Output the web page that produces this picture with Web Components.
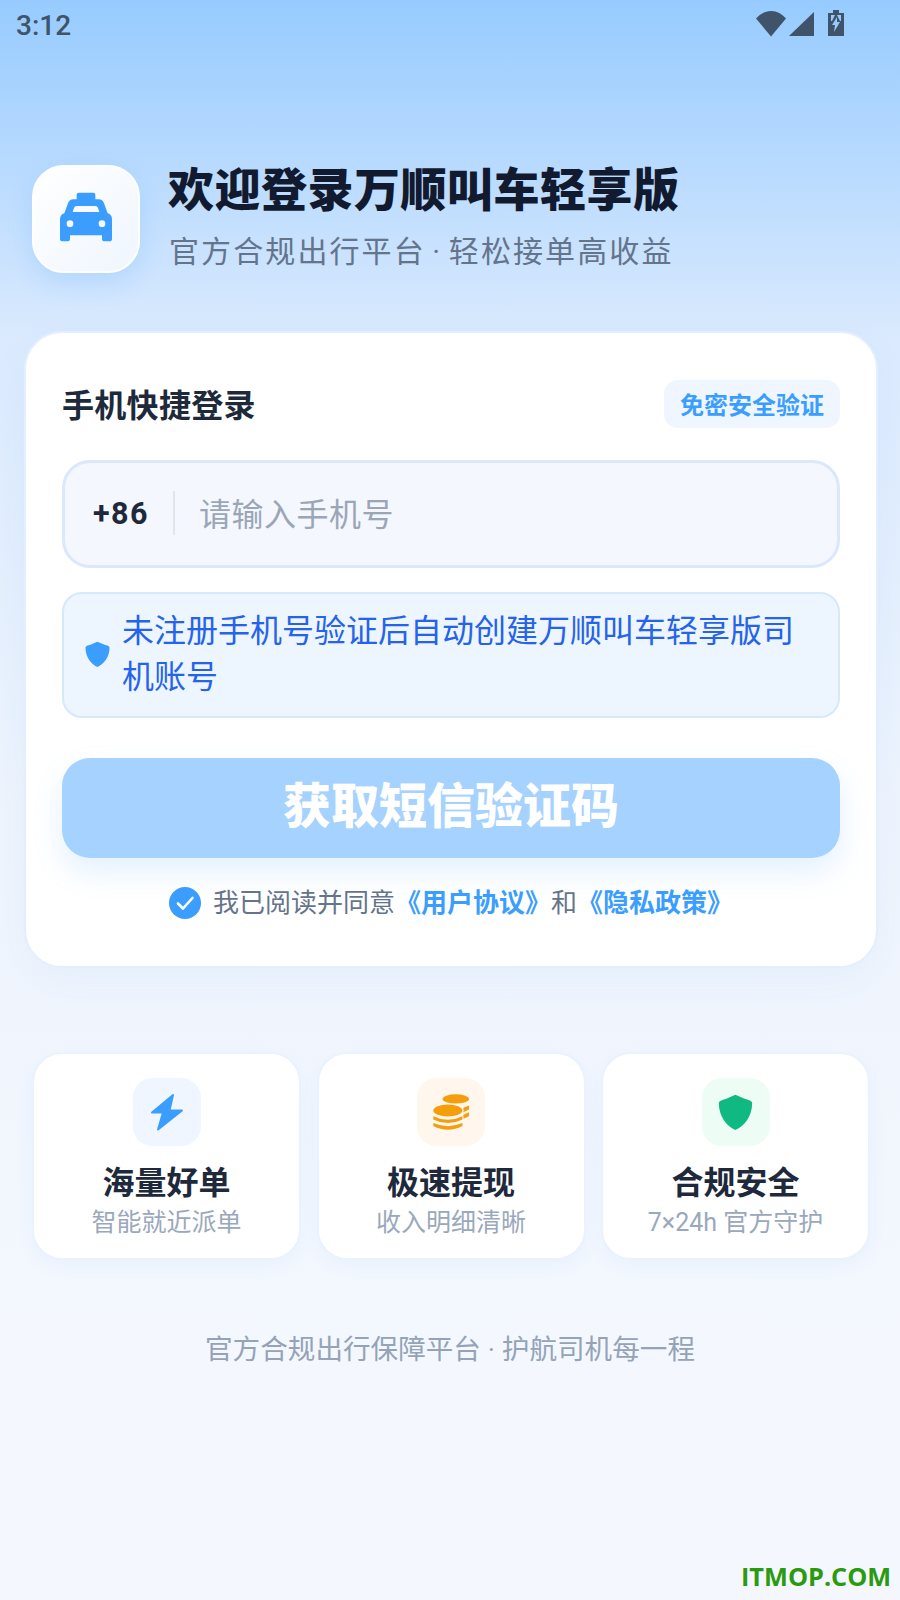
<!DOCTYPE html>
<html lang="zh-CN"><head><meta charset="utf-8"><title>万顺叫车轻享版</title>
<style>
html,body{margin:0;padding:0}
body{width:900px;height:1600px;overflow:hidden;position:relative;font-family:Roboto,"Noto Sans CJK SC",sans-serif;
background:linear-gradient(180deg,#97cbff 0,#dbeafe 340px,#eef4fd 800px,#f4f8fe 1400px,#f4f8fe 1600px)}
</style></head><body>
<status-bar></status-bar>
<brand-header title="欢迎登录万顺叫车轻享版" sub="官方合规出行平台 · 轻松接单高收益"></brand-header>
<login-card>
  <phone-input></phone-input>
  <notice-box>未注册手机号验证后自动创建万顺叫车轻享版司机账号</notice-box>
  <primary-button>获取短信验证码</primary-button>
  <agree-row></agree-row>
</login-card>
<feature-grid>
  <feature-card tint="#eff6ff" title="海量好单" sub="智能就近派单"><svg viewBox="0 0 34 38" width="34" height="38"><path d="M23 2 2 19.5H13L8 36.5 32 17.500H19.500Z" fill="#3b9eff" stroke="#3b9eff" stroke-width="2" stroke-linejoin="round"/></svg></feature-card>
  <feature-card tint="#fff6ed" title="极速提现" sub="收入明细清晰"><svg viewBox="95 80 115 115" width="38" height="38"><g fill="#f59e0b"><ellipse cx="167" cy="98" rx="40" ry="14"/><path d="M190 125 207 118V130L190 138ZM190 146 207 138V150L190 158Z"/><ellipse cx="143" cy="133" rx="44" ry="18" stroke="#fff6ed" stroke-width="6" paint-order="stroke"/><path d="M99 150Q143 172 187 150V160Q143 182 99 160ZM99 171Q143 190 187 171V180Q143 203 99 180Z"/></g></svg></feature-card>
  <feature-card tint="#edfcf5" title="合规安全" sub="7×24h 官方守护"><svg viewBox="85 83 105 112" width="35" height="37"><path d="M137 85 165 97Q188 102 188 110C188 150 165 180 137 192 110 180 87 150 87 110Q87 102 110 97Z" fill="#10b981"/></svg></feature-card>
</feature-grid>
<page-footer>官方合规出行保障平台 · 护航司机每一程</page-footer>
<water-mark>ITMOP.COM</water-mark>
<script>
function def(name,css,html){
  customElements.define(name,class extends HTMLElement{
    connectedCallback(){
      if(this.shadowRoot)return;
      const r=this.attachShadow({mode:'open'});
      r.innerHTML='<style>'+css+'</style>'+(typeof html==='function'?html(this):html);
    }
  });
}
def('status-bar',`:host{display:flex;align-items:center;height:50px;padding:0 0 0 16px;color:#3f5369;box-sizing:border-box}
.t{font:500 28px Roboto,sans-serif;flex:1;line-height:50px;padding-top:2px}
.i{display:flex;align-items:flex-start;padding:5px 56px 0 0;height:40px;box-sizing:border-box}
svg{display:block;fill:#3f5369}`,
`<span class="t">3:12</span><div class="i">
<svg width="30" height="26" viewBox="0 0 30 26" style="margin-top:1px"><path d="M15 25.500 0 7.500C4 3 9 0 15 0S26 3 30 7.500Z"/></svg>
<svg width="25" height="25" viewBox="0 0 25 25" style="margin:2px 0 0 3px"><path d="M25 0V24H0Z"/></svg>
<svg width="16" height="26" viewBox="0 0 16 26" style="margin-left:14px"><path d="M5 0h6v3h5v23H0V3h5Z"/><path d="M3 5h4L4 11H3ZM9 5h4v6h-1ZM9 7 4 15h3l-1 7 6-10H9Z" fill="#97cbff"/></svg></div>`);
def('brand-header',`:host{display:flex;align-items:center;height:108px;margin:115px 0 0 32px;gap:28px}
.logo{width:108px;height:108px;box-sizing:border-box;border:2px solid #fff;border-radius:32px;background:linear-gradient(135deg,#fff,#eff6ff);box-shadow:0 10px 24px rgba(59,158,255,.18);display:flex;align-items:center;justify-content:center}
.logo svg{margin-bottom:4px}
.tx{margin-bottom:2px}
h1{margin:0;font-size:46px;font-weight:900;line-height:56px;color:#111a2e;letter-spacing:.5px}
p{margin:12px 0 0 1px;font-size:30px;line-height:44px;color:#64748b;letter-spacing:2.1px;word-spacing:-3px}`,
h=>`<div class="logo"><svg width="52" height="50" viewBox="0 0 156 150"><path fill="#3b9eff" fill-rule="evenodd" d="M56 2H100Q106 2 106 8V22H116Q128 22 132 34L143 64Q156 68 156 82V140Q156 148 148 148H134Q126 148 126 140V130H30V140Q30 148 22 148H8Q0 148 0 140V82Q0 68 13 64L24 34Q28 22 40 22H50V8Q50 2 56 2ZM50 42Q44 42 42 48L38 60H118L114 48Q112 42 106 42ZM30 85A10 10 0 1 0 30 105 10 10 0 1 0 30 85ZM126 85A10 10 0 1 0 126 105 10 10 0 1 0 126 85Z"/></svg></div>
<div class="tx"><h1>${h.getAttribute('title')}</h1><p>${h.getAttribute('sub')}</p></div>`);
def('login-card',`:host{display:block;margin:58px 22px 0 24px;padding:47px 36px 46px;background:#fff;border:2px solid #e4effd;border-radius:38px;box-shadow:0 14px 40px rgba(59,130,246,.06)}
.head{display:flex;justify-content:space-between;align-items:center;margin-bottom:32px;height:48px}
h2{margin:-2px 0 0;font-size:32px;font-weight:700;color:#1e293b;letter-spacing:.3px}
.b{height:48px;display:flex;align-items:center;padding:0 16px 2px;box-sizing:border-box;border-radius:14px;background:#eff6ff;color:#3b9eff;font-size:24px;font-weight:700}`,
`<div class="head"><h2>手机快捷登录</h2><span class="b">免密安全验证</span></div><slot></slot>`);
def('phone-input',`:host{display:flex;align-items:center;height:108px;box-sizing:border-box;border:3px solid #dbe7fa;border-radius:28px;background:#f4f7fd;padding:0 0 2px 28px}
.c{font:700 30.500px Roboto,sans-serif;letter-spacing:1.5px;color:#1e293b;width:80px}
.d{width:2px;height:44px;background:#dfe6f0}
.p{margin:0 0 3px 24px;font-size:32px;letter-spacing:.5px;color:#9aa6b8}`,
`<span class="c">+86</span><span class="d"></span><span class="p">请输入手机号</span>`);
def('notice-box',`:host{display:flex;align-items:center;box-sizing:border-box;height:126px;margin-top:24px;border:2px solid #d6e8fe;border-radius:20px;background:#edf5ff;padding:0 30px 2px 21px;gap:12px;color:#2563eb;font-size:32px;line-height:46px}
svg{flex:none}`,
`<svg width="25" height="27" viewBox="85 83 105 112"><path d="M137 85 165 97Q188 102 188 110C188 150 165 180 137 192 110 180 87 150 87 110Q87 102 110 97Z" fill="#3b9eff"/></svg><span><slot></slot></span>`);
def('primary-button',`:host{display:flex;align-items:center;justify-content:center;box-sizing:border-box;height:100px;padding-bottom:12px;margin-top:40px;border-radius:28px;background:#a6d2ff;color:#fff;font-size:48px;font-weight:900;box-shadow:0 14px 30px rgba(59,158,255,.14)}`,`<slot></slot>`);
def('agree-row',`:host{display:flex;align-items:center;justify-content:center;margin:29px 0 1px;height:32px;font-size:26px;color:#64748b;gap:12px;white-space:nowrap}
span{margin-bottom:6px}
b{color:#3b9eff;font-weight:700}`,
`<svg width="32" height="32" viewBox="0 0 32 32"><circle cx="16" cy="16" r="16" fill="#3b9eff"/><path d="M9 16.500 14 21.500 23.500 11" fill="none" stroke="#fff" stroke-width="2.600" stroke-linecap="round" stroke-linejoin="round"/></svg><span>我已阅读并同意<b>《用户协议》</b>和<b>《隐私政策》</b></span>`);
def('feature-grid',`:host{display:grid;grid-template-columns:repeat(3,269px);gap:15.500px;margin:84px 0 0 32px}`,`<slot></slot>`);
def('feature-card',`:host{display:flex;flex-direction:column;align-items:center;box-sizing:border-box;height:208px;padding-top:24px;border:2px solid #eaf2fd;border-radius:30px;background:#fff;box-shadow:0 6px 18px rgba(59,130,246,.05)}
.i{width:68px;height:68px;border-radius:20px;display:flex;align-items:center;justify-content:center}
.t{margin-top:16px;font-size:32px;line-height:42px;font-weight:700;color:#1e293b}
.s{margin-top:2px;font-size:25px;line-height:34px;color:#9aa8bc;white-space:nowrap}`,
h=>`<div class="i" style="background:${h.getAttribute('tint')}"><slot></slot></div><div class="t">${h.getAttribute('title')}</div><div class="s">${h.getAttribute('sub')}</div>`);
def('page-footer',`:host{display:block;margin-top:70px;text-align:center;font-size:27.600px;line-height:40px;color:#94a3b8}`,`<slot></slot>`);
def('water-mark',`:host{position:absolute;left:741px;top:1558px;font:700 25.300px "Open Sans",sans-serif;color:#2a9a10;line-height:36px}`,`<slot></slot>`);
</script>
</body></html>
